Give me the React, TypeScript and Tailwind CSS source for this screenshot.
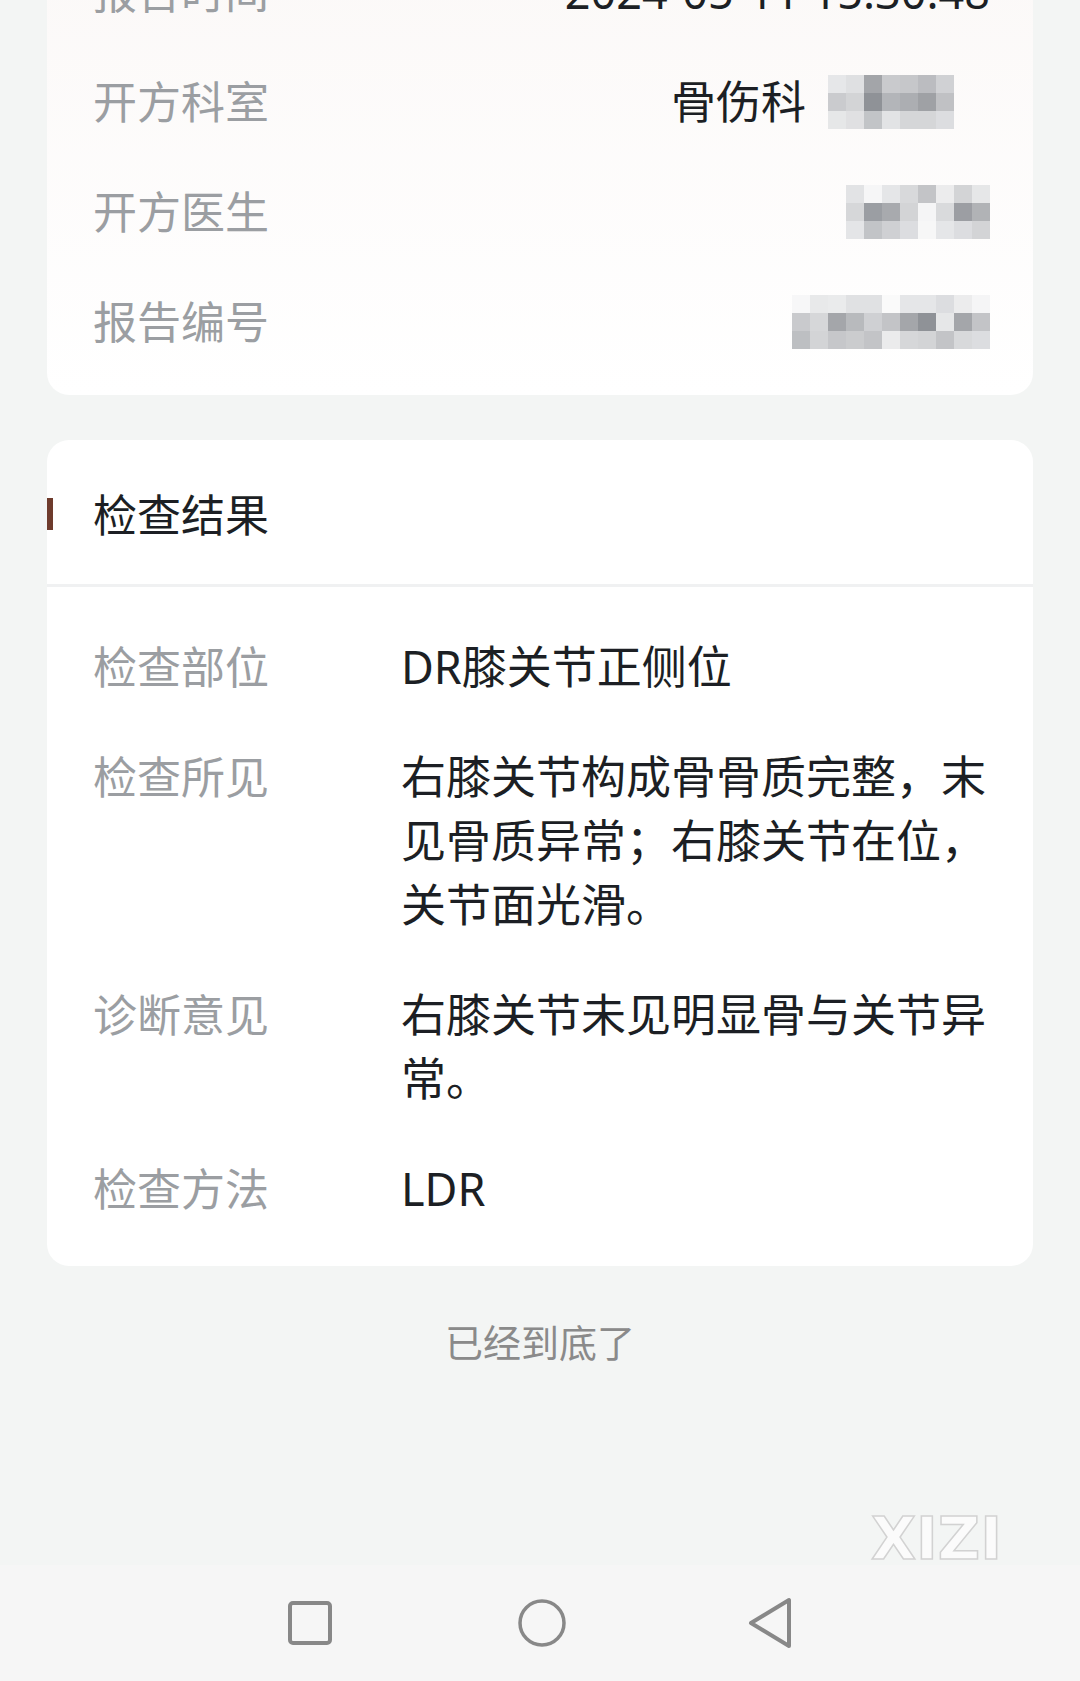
import React from "react";

const FONT = "font-['Noto_Sans','Noto_Sans_CJK_SC',sans-serif]";

// pixelated (mosaic) blocks covering personal info
const deptBlur = [
  ["bg-[#e6e7e9]", "bg-[#dfe0e2]", "bg-[#a3a5a9]", "bg-[#c9cacd]", "bg-[#c6c7ca]", "bg-[#bbbcc0]", "bg-[#d0d1d4]"],
  ["bg-[#cacbce]", "bg-[#d3d4d6]", "bg-[#8f9297]", "bg-[#b3b5b9]", "bg-[#acaeb2]", "bg-[#9fa1a5]", "bg-[#c0c1c4]"],
  ["bg-[#e6e7e8]", "bg-[#e0e0e2]", "bg-[#c2c4c7]", "bg-[#e2e3e5]", "bg-[#d5d6d8]", "bg-[#d5d6d8]", "bg-[#dcdde0]"],
];

const doctorBlur = [
  ["bg-[#e2e3e5]", "bg-[#f6f6f7]", "bg-[#e5e6e8]", "bg-[#d8d9db]", "bg-[#c3c4c7]", "bg-[#ececed]", "bg-[#d3d4d6]", "bg-[#e6e7e8]"],
  ["bg-[#d6d7d9]", "bg-[#9b9ea3]", "bg-[#a8aaae]", "bg-[#d3d4d6]", "bg-[#f5f5f6]", "bg-[#d9dadc]", "bg-[#9c9ea3]", "bg-[#b1b3b6]"],
  ["bg-[#e4e5e7]", "bg-[#c2c4c7]", "bg-[#cfd0d3]", "bg-[#dcdde0]", "bg-[#f7f7f7]", "bg-[#e5e6e8]", "bg-[#dcdde0]", "bg-[#d3d4d6]"],
];

const reportBlur = [
  ["bg-[#f7f7f8]", "bg-[#e8e9ea]", "bg-[#eaebec]", "bg-[#e0e1e3]", "bg-[#e0e1e3]", "bg-[#fafafa]", "bg-[#e5e6e8]", "bg-[#e5e6e8]", "bg-[#dcdde0]", "bg-[#ececed]", "bg-[#f5f5f6]"],
  ["bg-[#c9cacd]", "bg-[#d6d7d9]", "bg-[#a4a6aa]", "bg-[#b8babd]", "bg-[#cfd0d3]", "bg-[#c3c4c7]", "bg-[#a4a6aa]", "bg-[#8f9297]", "bg-[#e6e7e8]", "bg-[#a4a6aa]", "bg-[#c3c4c7]"],
  ["bg-[#bdbfc2]", "bg-[#d3d4d6]", "bg-[#c6c7ca]", "bg-[#cbccce]", "bg-[#c3c4c7]", "bg-[#ebebec]", "bg-[#d6d7d9]", "bg-[#d3d4d6]", "bg-[#c3c4c7]", "bg-[#d8d9db]", "bg-[#dcdde0]"],
];

function Mosaic({ cells }: { cells: string[][] }) {
  return (
    <div className="flex flex-col">
      {cells.map((row, i) => (
        <div key={i} className="flex">
          {row.map((c, j) => (
            <div key={j} className={`h-[18px] w-[18px] ${c}`} />
          ))}
        </div>
      ))}
    </div>
  );
}

function InfoRow({ label, children }: { label: string; children: React.ReactNode }) {
  return (
    <div className="flex items-center justify-between h-[64px]">
      <span className="text-[44px] leading-[64px] text-[#9b9ea2]">{label}</span>
      <div className="flex items-center text-[45px] leading-[64px] text-[#1c1f24]">{children}</div>
    </div>
  );
}

function ResultRow({ label, value }: { label: string; value: string }) {
  return (
    <div className="flex">
      <span className="w-[308px] shrink-0 text-[44px] leading-[64px] text-[#9b9ea2]">{label}</span>
      <p className="w-[600px] text-[45px] leading-[64px] text-[#1c1f24]">{value}</p>
    </div>
  );
}

export default function App() {
  return (
    <div className={`relative flex h-[1681px] w-[1080px] flex-col overflow-hidden bg-[#f3f5f4] ${FONT}`}>
      <div className="flex flex-1 flex-col px-[47px] -mt-[80px]">
        {/* basic info card */}
        <div className="flex flex-col gap-[46px] rounded-[22px] bg-gradient-to-b from-[#fbf8f7] to-white pt-[40px] pb-[41px] pl-[46px] pr-[43px]">
          <InfoRow label="报告时间">2024-05-11 15:30:48</InfoRow>
          <InfoRow label="开方科室">
            <span>骨伤科</span>
            <div className="ml-[22px] mr-[36px]">
              <Mosaic cells={deptBlur} />
            </div>
          </InfoRow>
          <InfoRow label="开方医生">
            <Mosaic cells={doctorBlur} />
          </InfoRow>
          <InfoRow label="报告编号">
            <Mosaic cells={reportBlur} />
          </InfoRow>
        </div>

        {/* result card */}
        <div className="mt-[45px] rounded-[22px] bg-white">
          <div className="relative flex h-[144px] items-center pl-[46px] pt-[6px]">
            <div className="absolute left-0 top-[58px] h-[32px] w-[6px] bg-[#6e3b2c]" />
            <span className="text-[44px] leading-[64px] text-[#1c1f24]">检查结果</span>
          </div>
          <div className="h-[3px] bg-[#f0f1f2]" />
          <div className="flex flex-col gap-[46px] pt-[48px] pb-[45px] pl-[46px]">
            <ResultRow label="检查部位" value="DR膝关节正侧位" />
            <ResultRow label="检查所见" value="右膝关节构成骨骨质完整，末见骨质异常；右膝关节在位，关节面光滑。" />
            <ResultRow label="诊断意见" value="右膝关节未见明显骨与关节异常。" />
            <ResultRow label="检查方法" value="LDR" />
          </div>
        </div>

        <p className="mt-[51px] text-center text-[38px] leading-[50px] text-[#8a8a8a]">已经到底了</p>
      </div>

      {/* system nav bar */}
      <div className="flex h-[116px] items-center justify-center bg-[#f6f6f6]">
        <svg width="46" height="46" viewBox="0 0 46 46">
          <rect x="3" y="3" width="40" height="40" rx="3" fill="none" stroke="#888888" strokeWidth="4" />
        </svg>
        <svg width="50" height="50" viewBox="0 0 50 50" className="ml-[184px]">
          <circle cx="25" cy="25" r="22" fill="none" stroke="#888888" strokeWidth="3.5" />
        </svg>
        <svg width="46" height="52" viewBox="0 0 46 52" className="ml-[180px]">
          <path d="M42 3 L42 49 L4 26 Z" fill="none" stroke="#888888" strokeWidth="4" strokeLinejoin="round" />
        </svg>
      </div>

      {/* watermark */}
      <svg className="absolute left-[866px] top-[1504px]" width="150" height="76" viewBox="0 0 150 76">
        <text
          x="5"
          y="55"
          textLength="131"
          lengthAdjust="spacingAndGlyphs"
          fontFamily="'DejaVu Sans', sans-serif"
          fontWeight="bold"
          fontSize="58"
          fill="#fbfbfb"
          stroke="#d2d2d2"
          strokeWidth="1.5"
        >
          XIZI
        </text>
      </svg>
    </div>
  );
}
